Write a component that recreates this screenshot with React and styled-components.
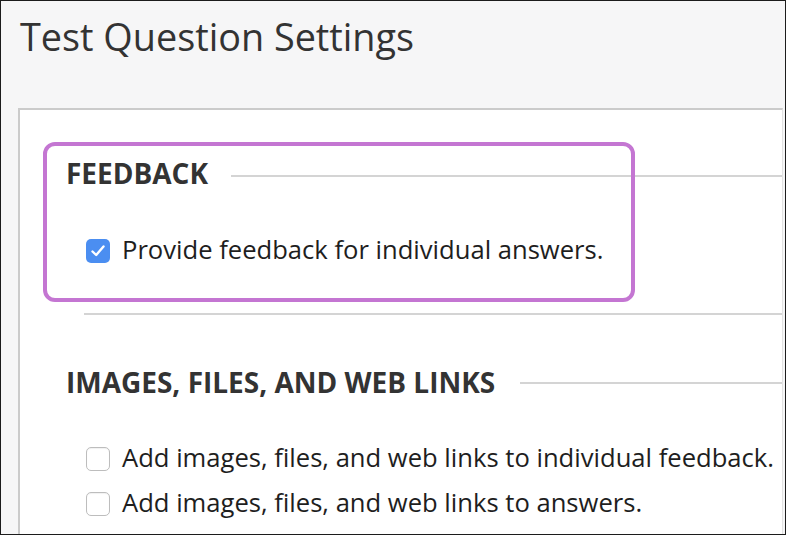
import React from 'react';
import styled, { createGlobalStyle } from 'styled-components';

const GlobalStyle = createGlobalStyle`
	body {
		margin: 0;
		font-family: "Open Sans", "Liberation Sans", sans-serif;
	}
`;

const Frame = styled.div`
	width: 786px;
	height: 535px;
	box-sizing: border-box;
	border: 1px solid #1c1c1c;
	background: #f6f6f7;
	display: flex;
	flex-direction: column;
	overflow: hidden;
`;

const Title = styled.h1`
	margin: 0;
	padding: 10px 0 0 19px;
	font-size: 37.8px;
	line-height: 52px;
	font-weight: 400;
	color: #333;
`;

const Panel = styled.div`
	flex: 1;
	margin: 45px 2px 0 17px;
	background: #fff;
	border-top: 2px solid #cbcbcb;
	border-left: 2px solid #cbcbcb;
	border-right: 1px solid #e2e2e2;
`;

const Section = styled.section`
	position: relative;
	padding: ${p => p.$top}px 0 0 46px;
`;

const Heading = styled.div`
	display: flex;
	align-items: center;
	gap: ${p => p.$gap}px;
`;

const HeadingText = styled.h2`
	margin: 0;
	font-size: 28px;
	line-height: 38px;
	font-weight: 700;
	color: #333;
	white-space: nowrap;
`;

const Rule = styled.div`
	flex: 1;
	height: 2px;
	margin-top: ${p => p.$shift}px;
	background: #d4d4d4;
`;

const Options = styled.div`
	display: flex;
	flex-direction: column;
	gap: 10px;
	margin-top: ${p => p.$top}px;
	padding-left: 20px;
`;

const Row = styled.label`
	display: flex;
	align-items: center;
	gap: 12px;
	font-size: 25.6px;
	line-height: 35px;
	color: #1e1e1e;
	white-space: nowrap;
`;

const Box = styled.span`
	flex: none;
	width: 24px;
	height: 24px;
	margin-top: 3px;
	box-sizing: border-box;
	border-radius: 5px;
	display: flex;
	align-items: center;
	justify-content: center;
	background: ${p => (p.$checked ? '#4b8ef1' : '#fff')};
	border: ${p => (p.$checked ? 'none' : '1.5px solid #bdbdbd')};
	box-shadow: ${p => (p.$checked ? 'none' : 'inset 0 1px 1px rgba(0,0,0,0.06)')};
`;

const Divider = styled.div`
	height: 2px;
	margin: 46px 0 0 64px;
	background: #d4d4d4;
`;

const Highlight = styled.div`
	position: absolute;
	left: 23px;
	top: 32px;
	width: 592px;
	height: 160px;
	box-sizing: border-box;
	border: 4px solid #c476d2;
	border-radius: 12px;
	pointer-events: none;
`;

const Check = () => (
	<svg width="16" height="14" viewBox="0 0 16 14">
		<path d="M2.5 7.5 L6.2 11 L13.5 2.5" fill="none" stroke="#fff" strokeWidth="2.4" strokeLinecap="round" strokeLinejoin="round" />
	</svg>
);

const Option = ({ checked, children }) => (
	<Row>
		<Box $checked={checked}>{checked ? <Check /> : null}</Box>
		{children}
	</Row>
);

const App = () => {
	return (
		<>
			<GlobalStyle />
			<Frame>
				<Title>Test Question Settings</Title>
				<Panel>
					<Section $top={44}>
						<Highlight />
						<Heading $gap={23}>
							<HeadingText>FEEDBACK</HeadingText>
							<Rule $shift={6} />
						</Heading>
						<Options $top={40}>
							<Option checked>Provide feedback for individual answers.</Option>
						</Options>
					</Section>
					<Divider />
					<Section $top={48}>
						<Heading $gap={25}>
							<HeadingText>IMAGES, FILES, AND WEB LINKS</HeadingText>
							<Rule $shift={2} />
						</Heading>
						<Options $top={39}>
							<Option>Add images, files, and web links to individual feedback.</Option>
							<Option>Add images, files, and web links to answers.</Option>
						</Options>
					</Section>
				</Panel>
			</Frame>
		</>
	);
};

export default App;
